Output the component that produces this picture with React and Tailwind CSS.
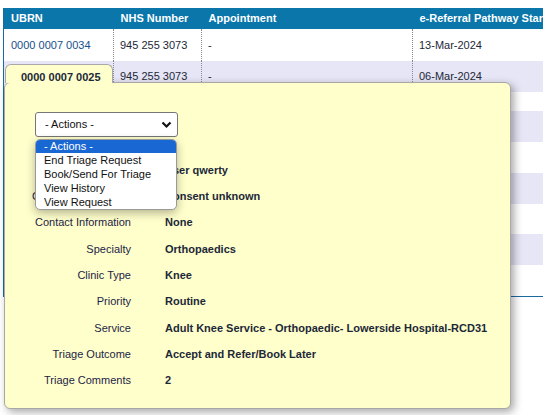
import React from 'react';

const columns = [
    { header: 'UBRN', accessor: 'ubrn', width: 'w-[110px]' },
    { header: 'NHS Number', accessor: 'nhs', width: 'w-[88px]' },
    { header: 'Appointment', accessor: 'appt', width: 'w-[211px]' },
    { header: 'e-Referral Pathway Start', accessor: 'date', width: 'w-[211px]' },
];

// second row's UBRN sits under the popup tab, so it is left blank here
const rows = [
    { ubrn: '0000 0007 0034', nhs: '945 255 3073', appt: '-', date: '13-Mar-2024', h: 'h-[32px]' },
    { ubrn: '', nhs: '945 255 3073', appt: '-', date: '06-Mar-2024', h: 'h-[31px]' },
    { h: 'h-[19px]' },
    { h: 'h-[31px]' },
    { h: 'h-[31px]' },
    { h: 'h-[31px]' },
    { h: 'h-[30px]' },
    { h: 'h-[31px]' },
    { h: 'h-[31px]' },
];

const details = [
    { label: 'Referrer', value: 'User qwerty' },
    { label: 'Consent Information', value: 'Consent unknown' },
    { label: 'Contact Information', value: 'None' },
    { label: 'Specialty', value: 'Orthopaedics' },
    { label: 'Clinic Type', value: 'Knee' },
    { label: 'Priority', value: 'Routine' },
    { label: 'Service', value: 'Adult Knee Service - Orthopaedic- Lowerside Hospital-RCD31' },
    { label: 'Triage Outcome', value: 'Accept and Refer/Book Later' },
    { label: 'Triage Comments', value: '2' },
];

const actions = ['- Actions -', 'End Triage Request', 'Book/Send For Triage', 'View History', 'View Request'];

export default function App() {
    return (
        <div className="relative w-[543px] h-[415px] overflow-hidden bg-white font-['Liberation_Sans',Arial,sans-serif] text-[11px]">
            <div className="pt-[8px] pl-[3px]">
                <table className="w-[620px] table-fixed border-collapse border-l border-b border-[#1a6aa0] text-left">
                    <thead>
                        <tr className="h-[21px] bg-[#0a76aa] text-white">
                            {columns.map((column, index) => (
                                <th key={index} className={`${column.width} px-[7px] p-0 font-bold`}>
                                    {column.header}
                                </th>
                            ))}
                        </tr>
                    </thead>
                    <tbody>
                        {rows.map((row, rowIndex) => (
                            <tr key={rowIndex} className={`${row.h} ${rowIndex % 2 === 1 ? 'bg-[#e6e6f6]' : 'bg-white'}`}>
                                {columns.map((column, colIndex) => (
                                    <td
                                        key={colIndex}
                                        className={`p-0 px-[6px] whitespace-nowrap ${colIndex > 0 ? 'border-l border-dotted border-[#8a8a8a]' : 'pl-[7px]'} ${colIndex === 0 ? 'text-[#17508a]' : 'text-[#1c2838]'}`}
                                    >
                                        {row[column.accessor]}
                                    </td>
                                ))}
                            </tr>
                        ))}
                    </tbody>
                </table>
            </div>

            {/* detail popup */}
            <div className="absolute left-[4px] top-[82px] w-[507px] h-[327px] rounded-[6px] border border-[#a8a8a8] bg-[#ffffcc] shadow-[3px_3px_8px_rgba(0,0,0,0.35)] pt-[29px]">
                <div className="ml-[30px] w-[143px] h-[25px] rounded-[3px] border border-[#767676] bg-white flex items-center justify-between pl-[9px] pr-[5px] text-[#111]">
                    <span>- Actions -</span>
                    <svg width="11" height="8" viewBox="0 0 11 8">
                        <path d="M1.5 1.5 L5.5 5.5 L9.5 1.5" fill="none" stroke="#111" strokeWidth="2.2" />
                    </svg>
                </div>

                <div className="mt-[20px]">
                    {details.map((item, index) => (
                        <div key={index} className="flex items-center h-[26.3px]">
                            <div className="w-[126px] text-right text-[#1d2346] whitespace-nowrap">{item.label}</div>
                            <div className="ml-[34px] font-bold text-[#1c2838] whitespace-nowrap">{item.value}</div>
                        </div>
                    ))}
                </div>

                <div className="absolute left-[30px] top-[56px] w-[142px] h-[71px] rounded-[5px] border border-[#9a9a9a] bg-white shadow-[0_3px_10px_rgba(0,0,0,0.3)] overflow-hidden z-10">
                    {actions.map((action, index) => (
                        <div
                            key={index}
                            className={`whitespace-nowrap pl-[8px] ${index === 0 ? 'bg-[#1967d2] text-white h-[13px] leading-[13px]' : 'h-[14px] leading-[14px] text-[#111]'}`}
                        >
                            {action}
                        </div>
                    ))}
                </div>
            </div>

            <div className="absolute left-[5px] top-[64px] w-[108px] h-[19px] rounded-t-[6px] border border-b-0 border-[#a8a8a8] bg-[#ffffcc] pl-[15px] pt-[4px] font-bold text-[#1c2838]">
                0000 0007 0025
            </div>
        </div>
    );
}
